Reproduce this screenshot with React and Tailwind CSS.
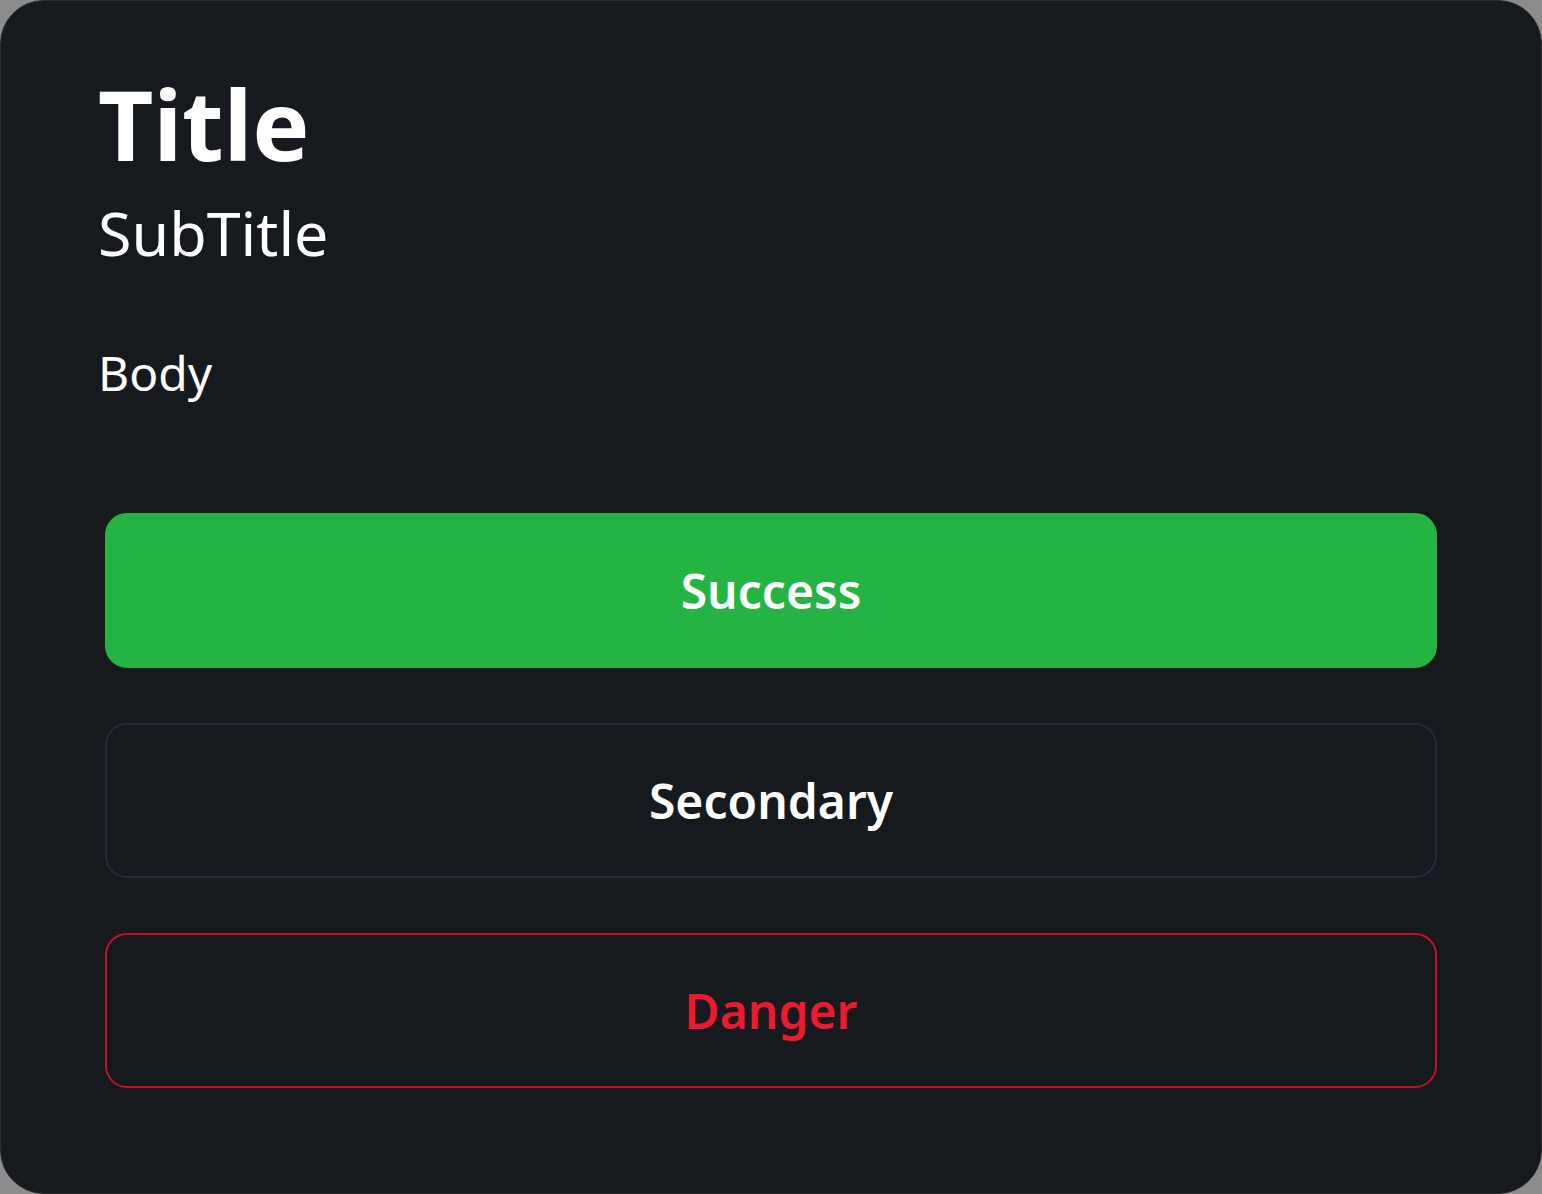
import React from "react";

function ActionButton({ variant, children }) {
  const styles = {
    success: "bg-[#25b443] border-[#25b443] text-white",
    secondary: "bg-transparent border-[#272a36] text-white",
    danger: "bg-transparent border-[#c8102a] text-[#ec1a2f]",
  };
  return (
    <button
      className={
        "w-full h-[155px] rounded-[22px] border-2 flex items-center justify-center text-[48px] font-semibold " +
        styles[variant]
      }
    >
      {children}
    </button>
  );
}

export default function App() {
  return (
    <div
      className="w-[1542px] h-[1194px] bg-[#8c8c8c]"
      style={{ fontFamily: '"Noto Sans", "Open Sans", sans-serif' }}
    >
      <div className="w-full h-full bg-[#16191d] rounded-[44px] border border-[#2a2c30] pl-[97px] pr-[104px] pt-[75px] flex flex-col">
        <h1 className="text-[96px] font-bold text-white leading-none">Title</h1>
        <h2 className="text-[61px] text-white leading-none mt-[30px]">SubTitle</h2>
        <p className="text-[48px] text-white leading-none mt-[86px]">Body</p>
        <div className="flex flex-col gap-[55px] mt-[116px] pl-[7px]">
          <ActionButton variant="success">Success</ActionButton>
          <ActionButton variant="secondary">Secondary</ActionButton>
          <ActionButton variant="danger">Danger</ActionButton>
        </div>
      </div>
    </div>
  );
}
